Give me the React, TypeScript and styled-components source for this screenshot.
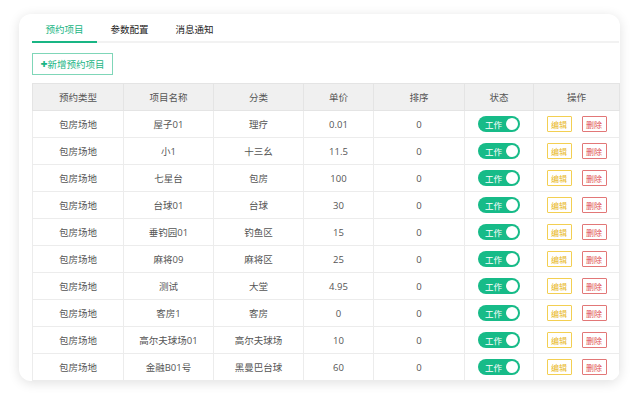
import styled, { createGlobalStyle } from 'styled-components'

const GlobalStyle = createGlobalStyle`
  html, body {
    margin: 0;
    padding: 0;
    background: #ffffff;
    font-family: "Open Sans", "Noto Sans CJK SC", sans-serif;
  }
`

const Page = styled.div`
  width: 636px;
  height: 399px;
  padding: 14px 16px 0 19px;
  box-sizing: border-box;
`

const Card = styled.div`
  width: 601px;
  height: 367px;
  background: #ffffff;
  border-radius: 12px;
  box-shadow: 0 2px 12px rgba(0, 0, 0, 0.12);
  padding: 0 1px 0 13px;
  box-sizing: border-box;
  overflow: hidden;
`

const TabBar = styled.div`
  display: flex;
  height: 27px;
  border-bottom: 2px solid #f2f2f2;
`

const Tab = styled.div<{ $active?: boolean }>`
  width: 65px;
  display: flex;
  align-items: center;
  justify-content: center;
  padding-top: 2px;
  font-size: 9.5px;
  color: ${p => (p.$active ? '#19b584' : '#222')};
  border-bottom: 2px solid ${p => (p.$active ? '#19b584' : 'transparent')};
  margin-bottom: -2px;
`

const Toolbar = styled.div`
  padding: 10px 0 8px;
  display: flex;
`

const AddBtn = styled.button`
  height: 22px;
  width: 81px;
  padding: 0;
  border: 1px solid #7fd6b8;
  background: #fff;
  color: #19b584;
  font-family: inherit;
  font-size: 9.5px;
  display: flex;
  align-items: center;
  justify-content: center;
  b {
    font-size: 12px;
    font-weight: 900;
    line-height: 1;
  }
`

const Table = styled.table`
  width: 587px;
  border-collapse: collapse;
  table-layout: fixed;
  font-size: 9.5px;
  color: #555;
`

const Th = styled.th`
  height: 26px;
  padding: 0;
  background: #f0f0f0;
  font-weight: normal;
  color: #555;
  border: 1px solid #e4e4e4;
`

const Td = styled.td`
  height: 26px;
  padding: 0;
  text-align: center;
  border: 1px solid #ececec;
`

const Switch = styled.span`
  display: inline-flex;
  align-items: center;
  justify-content: space-between;
  width: 42px;
  height: 16px;
  border-radius: 8px;
  background: #17bb88;
  color: #fff;
  font-size: 8.5px;
  padding: 0 2px 0 7px;
  box-sizing: border-box;
  vertical-align: middle;
`

const Knob = styled.span`
  width: 12px;
  height: 12px;
  border-radius: 50%;
  background: #fff;
`

const Actions = styled.div`
  display: flex;
  justify-content: center;
  gap: 10px;
`

const ActBtn = styled.span<{ $color: string; $border: string }>`
  display: inline-flex;
  align-items: center;
  justify-content: center;
  width: 25px;
  height: 16px;
  box-sizing: border-box;
  border: 1px solid ${p => p.$border};
  border-radius: 1px;
  color: ${p => p.$color};
  font-size: 8px;
`

const widths = [91, 90, 90, 70, 91, 69, 86]
const heads = ['预约类型', '项目名称', '分类', '单价', '排序', '状态', '操作']

const rows = [
  ['屋子01', '理疗', '0.01'],
  ['小1', '十三幺', '11.5'],
  ['七星台', '包房', '100'],
  ['台球01', '台球', '30'],
  ['垂钓园01', '钓鱼区', '15'],
  ['麻将09', '麻将区', '25'],
  ['测试', '大堂', '4.95'],
  ['客房1', '客房', '0'],
  ['高尔夫球场01', '高尔夫球场', '10'],
  ['金融B01号', '黑曼巴台球', '60'],
]

export default function App() {
  return (
    <Page>
      <GlobalStyle />
      <Card>
        <TabBar>
          <Tab $active>预约项目</Tab>
          <Tab>参数配置</Tab>
          <Tab>消息通知</Tab>
        </TabBar>
        <Toolbar>
          <AddBtn>
            <b>+</b>新增预约项目
          </AddBtn>
        </Toolbar>
        <Table>
          <colgroup>
            {widths.map((w, i) => (
              <col key={i} style={{ width: w }} />
            ))}
          </colgroup>
          <thead>
            <tr>
              {heads.map(h => (
                <Th key={h}>{h}</Th>
              ))}
            </tr>
          </thead>
          <tbody>
            {rows.map((r, i) => (
              <tr key={i}>
                <Td>包房场地</Td>
                <Td>{r[0]}</Td>
                <Td>{r[1]}</Td>
                <Td>{r[2]}</Td>
                <Td>0</Td>
                <Td>
                  <Switch>
                    工作
                    <Knob />
                  </Switch>
                </Td>
                <Td>
                  <Actions>
                    <ActBtn $color="#e8b71c" $border="#f3cf52">编辑</ActBtn>
                    <ActBtn $color="#e04f4f" $border="#e27777">删除</ActBtn>
                  </Actions>
                </Td>
              </tr>
            ))}
          </tbody>
        </Table>
      </Card>
    </Page>
  )
}
